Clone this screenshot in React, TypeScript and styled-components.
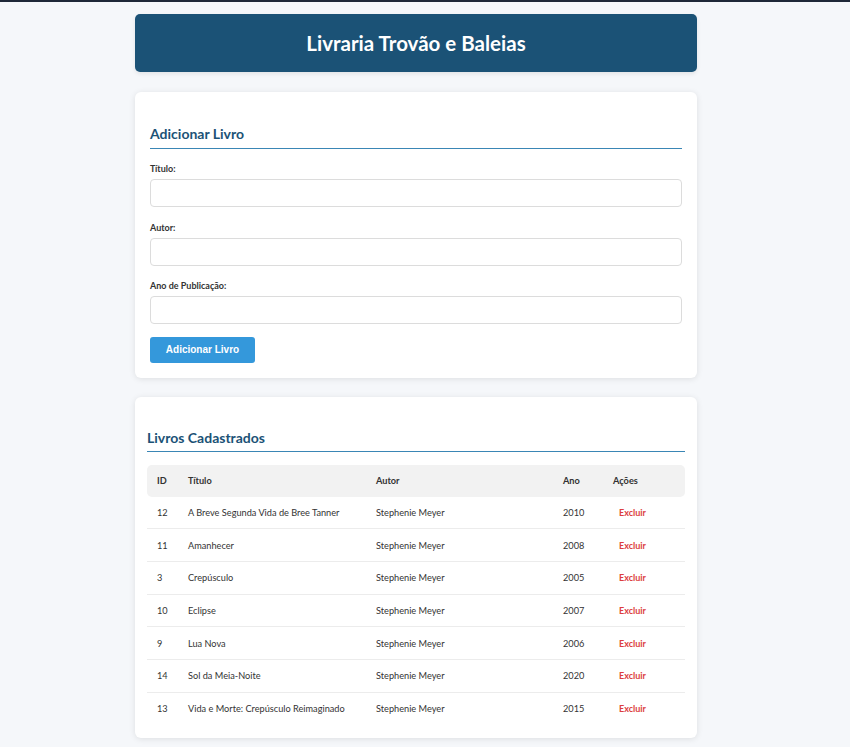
import React from "react";
import styled, { createGlobalStyle } from "styled-components";

const Global = createGlobalStyle`
  html, body { margin: 0; padding: 0; }
  body {
    background: #f5f7fa;
    border-top: 2px solid #1e2838;
    font-family: Lato, "Open Sans", sans-serif;
    color: #333;
  }
`;

const Page = styled.div`
  width: 562px;
  margin: 12px 0 0 calc(50% - 290px);
  display: flex;
  flex-direction: column;
  gap: 19px;
  padding-bottom: 9px;
`;

const Header = styled.header`
  height: 58px;
  background: #1b5276;
  border-radius: 5px;
  display: flex;
  align-items: center;
  justify-content: center;
  box-shadow: 0 2px 4px rgba(0,0,0,0.08);
  margin-bottom: 1px;
`;

const Title = styled.h1`
  margin: 0;
  color: #fff;
  font-size: 20.5px;
  font-weight: 700;
`;

const Card = styled.section<{ $pad: number; $top: number; $bottom: number }>`
  background: #fff;
  border-radius: 6px;
  box-shadow: 0 1px 6px rgba(0,0,0,0.1);
  padding: ${(p) => p.$top}px ${(p) => p.$pad}px ${(p) => p.$bottom}px;
`;

const SectionTitle = styled.h2<{ $compact?: boolean }>`
  margin: 0 0 ${(p) => (p.$compact ? 13 : 14)}px;
  font-size: 14px;
  font-weight: 700;
  color: #1b5276;
  padding: 0 0 ${(p) => (p.$compact ? 5 : 6)}px;
  border-bottom: 1px solid #3a86b5;
`;

const Field = styled.div`
  display: flex;
  flex-direction: column;
  gap: 5px;
  margin-bottom: 14.5px;
  &:last-of-type { margin-bottom: 12.5px; }
`;

const Label = styled.label`
  font-size: 9px;
  font-weight: 700;
  color: #333;
`;

const Input = styled.input`
  height: 28px;
  box-sizing: border-box;
  border: 1px solid #dcdcdc;
  border-radius: 4px;
  font-size: 11px;
  padding: 0 8px;
`;

const Button = styled.button`
  display: block;
  width: 105px;
  height: 26px;
  border: none;
  border-radius: 3px;
  background: #3498db;
  color: #fff;
  font-family: "Liberation Sans", Arial, sans-serif;
  font-weight: 700;
  font-size: 10px;
  padding: 0;
`;

const Table = styled.table`
  width: 100%;
  border-collapse: collapse;
  font-size: 9.2px;
`;

const Th = styled.th`
  text-align: left;
  background: #f2f2f2;
  font-weight: 700;
  height: 32px;
  padding: 0 10px;
  font-size: 9.2px;
  &:first-child { border-radius: 5px 0 0 5px; }
  &:last-child { border-radius: 0 5px 5px 0; }
`;

const Td = styled.td`
  height: 31.7px;
  padding: 0 10px;
  border-bottom: 1px solid #ececec;
  tr:last-child > & { border-bottom: none; }
`;

const Excluir = styled.button`
  background: none;
  border: none;
  color: #dc3e3e;
  font-family: inherit;
  font-weight: 700;
  font-size: 9px;
  padding: 0 6px;
`;

const books = [
  [12, "A Breve Segunda Vida de Bree Tanner", "Stephenie Meyer", 2010],
  [11, "Amanhecer", "Stephenie Meyer", 2008],
  [3, "Crepúsculo", "Stephenie Meyer", 2005],
  [10, "Eclipse", "Stephenie Meyer", 2007],
  [9, "Lua Nova", "Stephenie Meyer", 2006],
  [14, "Sol da Meia-Noite", "Stephenie Meyer", 2020],
  [13, "Vida e Morte: Crepúsculo Reimaginado", "Stephenie Meyer", 2015],
] as const;

export default function App() {
  return (
    <>
      <Global />
      <Page>
        <Header>
          <Title>Livraria Trovão e Baleias</Title>
        </Header>
        <Card $pad={15} $top={33} $bottom={15}>
          <SectionTitle>Adicionar Livro</SectionTitle>
          <Field>
            <Label>Título:</Label>
            <Input />
          </Field>
          <Field>
            <Label>Autor:</Label>
            <Input />
          </Field>
          <Field>
            <Label>Ano de Publicação:</Label>
            <Input />
          </Field>
          <Button>Adicionar Livro</Button>
        </Card>
        <Card $pad={12} $top={32} $bottom={14}>
          <SectionTitle $compact>Livros Cadastrados</SectionTitle>
          <Table>
            <thead>
              <tr>
                <Th style={{ width: 11 }}>ID</Th>
                <Th style={{ width: 168 }}>Título</Th>
                <Th style={{ width: 167 }}>Autor</Th>
                <Th style={{ width: 30 }}>Ano</Th>
                <Th>Ações</Th>
              </tr>
            </thead>
            <tbody>
              {books.map((b) => (
                <tr key={b[0]}>
                  <Td>{b[0]}</Td>
                  <Td>{b[1]}</Td>
                  <Td>{b[2]}</Td>
                  <Td>{b[3]}</Td>
                  <Td>
                    <Excluir>Excluir</Excluir>
                  </Td>
                </tr>
              ))}
            </tbody>
          </Table>
        </Card>
      </Page>
    </>
  );
}
